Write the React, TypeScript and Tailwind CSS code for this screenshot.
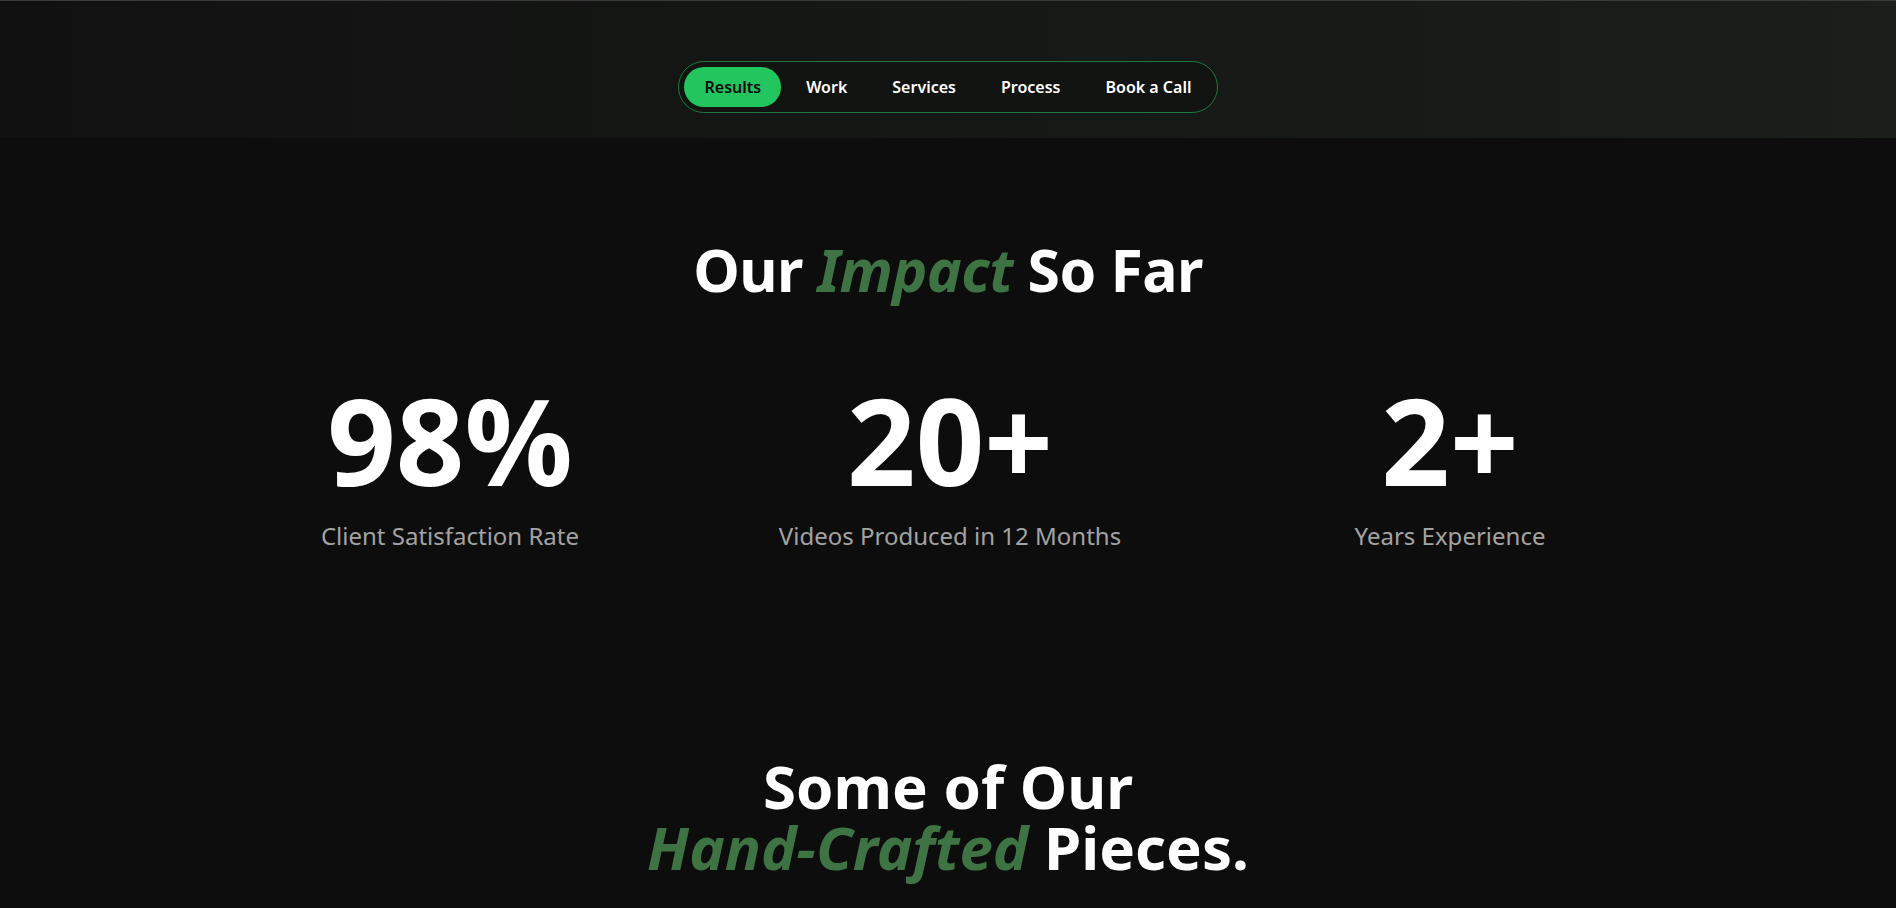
const navItems = ["Results", "Work", "Services", "Process", "Book a Call"]

const stats = [
  { value: "98%", label: "Client Satisfaction Rate" },
  { value: "20+", label: "Videos Produced in 12 Months" },
  { value: "2+", label: "Years Experience" },
]

function NavBar() {
  return (
    <header className="h-[138px] w-full border-t border-[#3a3a3a] bg-gradient-to-r from-[#111111] via-[#151815] to-[#1a1f1a]">
      <div className="flex justify-center pt-[60px]">
        <nav className="flex items-center gap-[5px] rounded-full border border-[#1f7a3e] bg-[#121412] p-[5px]">
          {navItems.map((item, i) => (
            <a
              key={item}
              href="#"
              className={
                i === 0
                  ? "flex h-10 items-center rounded-full bg-[#22c55e] px-5 text-base font-semibold text-[#0a0a0a]"
                  : "flex h-10 items-center rounded-full px-5 text-base font-semibold text-white"
              }
            >
              {item}
            </a>
          ))}
        </nav>
      </div>
    </header>
  )
}

export default function App() {
  return (
    <div
      className="min-h-[908px] w-full overflow-hidden bg-[#0d0d0d] text-white"
      style={{ fontFamily: '"Noto Sans", "Open Sans", sans-serif' }}
    >
      <NavBar />

      {/* IMPACT */}
      <section className="pt-[102px]">
        <h2 className="text-center text-[59px] font-bold leading-none tracking-[-0.01em]">
          Our <span className="italic text-[#3e7444]">Impact</span> So Far
        </h2>

        <div className="mx-auto mt-[81px] grid w-[1500px] grid-cols-3 translate-x-[2px]">
          {stats.map((s) => (
            <div key={s.label} className="flex flex-col items-center">
              <div className="text-[120px] font-bold leading-none">{s.value}</div>
              <div className="mt-[20px] text-2xl text-[#a3a3a3]">{s.label}</div>
            </div>
          ))}
        </div>
      </section>

      {/* WORK */}
      <section className="pt-[204px]">
        <h2 className="flex flex-col items-center text-[60px] font-bold leading-[61px]">
          <span>Some of Our</span>
          <span>
            <span className="italic text-[#3e7444]">Hand-Crafted</span> Pieces.
          </span>
        </h2>
      </section>
    </div>
  )
}
